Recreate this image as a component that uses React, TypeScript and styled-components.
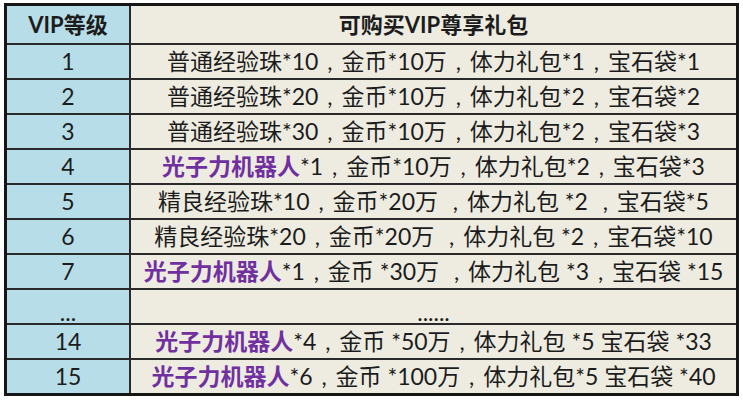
import * as React from 'react';
import styled, { createGlobalStyle } from 'styled-components';

const GlobalStyle = createGlobalStyle`
	html, body {
		margin: 0;
		background: #ffffff;
	}
	body {
		padding: 3px 0 0 4px;
		font-family: Lato, 'Noto Sans CJK SC', sans-serif;
		color: #1c1c1c;
	}
`;

const Table = styled.table`
	width: 735px;
	border-collapse: collapse;
	border: 3px solid #161616;
	font-size: 23px;
	line-height: 1;
`;

const HeadCell = styled.th<{ $level?: boolean }>`
	height: 37px;
	padding: 0;
	font-size: 22px;
	font-weight: 700;
	text-align: center;
	border: 2px solid #2a2a2a;
	background: ${(p) => (p.$level ? '#b7dee8' : '#eeece1')};
	width: ${(p) => (p.$level ? '122px' : 'auto')};
`;

const Cell = styled.td<{ $level?: boolean }>`
	height: 33px;
	padding: 0;
	text-align: center;
	white-space: pre;
	border: 2px solid #2a2a2a;
	background: ${(p) => (p.$level ? '#b7dee8' : '#eeece1')};
`;

const Robot = styled.span`
	color: #7030a0;
	font-weight: 700;
`;

/** 逗号居中，两侧留空 */
const Comma = styled.span`
	display: inline-block;
	width: 1em;
	text-align: center;
`;

const Dots = styled.span`
	position: relative;
	top: 6px;
`;

interface Row {
	level: string;
	robot?: string;
	text: string;
}

const rows: Row[] = [
	{ level: '1', text: '普通经验珠*10，金币*10万，体力礼包*1，宝石袋*1' },
	{ level: '2', text: '普通经验珠*20，金币*10万，体力礼包*2，宝石袋*2' },
	{ level: '3', text: '普通经验珠*30，金币*10万，体力礼包*2，宝石袋*3' },
	{ level: '4', robot: '光子力机器人', text: '*1，金币*10万，体力礼包*2，宝石袋*3' },
	{ level: '5', text: '精良经验珠*10，金币*20万 ，体力礼包 *2 ，宝石袋*5' },
	{ level: '6', text: '精良经验珠*20，金币*20万 ，体力礼包 *2，宝石袋*10' },
	{ level: '7', robot: '光子力机器人', text: '*1，金币 *30万 ，体力礼包 *3，宝石袋 *15' },
	{ level: '...', text: '......' },
	{ level: '14', robot: '光子力机器人', text: '*4，金币 *50万，体力礼包 *5 宝石袋 *33' },
	{ level: '15', robot: '光子力机器人', text: '*6，金币 *100万，体力礼包*5 宝石袋 *40' },
];

const renderText = (text: string) =>
	text.split('，').map((part, i) => (
		<React.Fragment key={i}>
			{i > 0 && <Comma>,</Comma>}
			{part}
		</React.Fragment>
	));

export default function App() {
	return (
		<>
			<GlobalStyle />
			<Table>
				<thead>
					<tr>
						<HeadCell $level>VIP等级</HeadCell>
						<HeadCell>可购买VIP尊享礼包</HeadCell>
					</tr>
				</thead>
				<tbody>
					{rows.map((row) => (
						<tr key={row.level}>
							<Cell $level>{row.level === '...' ? <Dots>{row.level}</Dots> : row.level}</Cell>
							<Cell>
								{row.robot && <Robot>{row.robot}</Robot>}
								{row.level === '...' ? <Dots>{row.text}</Dots> : renderText(row.text)}
							</Cell>
						</tr>
					))}
				</tbody>
			</Table>
		</>
	);
}
